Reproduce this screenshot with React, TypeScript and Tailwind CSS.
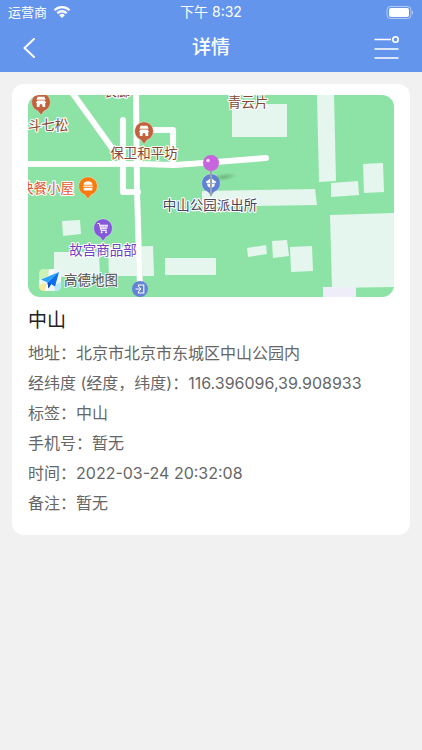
import type { ReactNode } from "react";

const details = [
  { label: "地址", value: "北京市北京市东城区中山公园内" },
  { label: "经纬度 (经度，纬度)", value: "116.396096,39.908933" },
  { label: "标签", value: "中山" },
  { label: "手机号", value: "暂无" },
  { label: "时间", value: "2022-03-24 20:32:08" },
  { label: "备注", value: "暂无" },
];

const buildings = [
  "204,9 259,9 259,42 204,42",
  "289,-1 306,-1 308,86 291,87",
  "303,88 330,86 331,100 303,102",
  "335,69 355,68 356,97 336,98",
  "174,96 287,94 289,110 174,112",
  "302,120 366,118 366,192 304,193",
  "244,146 259,145 261,161 245,163",
  "262,152 284,151 285,176 263,177",
  "219,153 238,150 239,159 220,162",
  "137,163 188,163 188,180 137,180",
  "80,152 125,151 126,181 81,181",
  "34,126 52,125 53,139 35,141",
  "26,157 71,157 72,181 26,182",
];

const roads = [
  "M43 -4 L89 60",
  "M-4 69 H112 L147 70 L175 68 L238 63",
  "M95 25 V97 H110",
  "M108 -4 L109 95 L112 196",
  "M125 35 H145 V70",
];

const labels = [
  { text: "斗七松", x: 20, y: 35, color: "#824934" },
  { text: "长廊", x: 89, y: 1, color: "#824934" },
  { text: "青云片", x: 220, y: 12, color: "#824934" },
  { text: "保卫和平坊", x: 116, y: 63, color: "#824934" },
  { text: "快餐小屋", x: 19, y: 98, color: "#e2582c" },
  { text: "中山公园派出所", x: 182, y: 115, color: "#45455c" },
  { text: "故宫商品部", x: 75, y: 160, color: "#7340bf" },
];

function Pin({ x, y, color, children }: { x: number; y: number; color: string; children: ReactNode }) {
  return (
    <g transform={`translate(${x} ${y})`}>
      <path
        d="M0 13 L-3 9 A9.3 9.3 0 1 1 3 9 Z"
        fill={color}
        stroke="#ffffff"
        strokeOpacity="0.5"
        strokeWidth="0.6"
      />
      {children}
    </g>
  );
}

function Temple() {
  return (
    <g fill="#ffffff">
      <path d="M-3.4 -5.2 H3.4 L4.6 -2.2 H-4.6 Z" />
      <path d="M-3.6 -1.6 H3.6 L5.2 1 H-5.2 Z" />
      <path d="M-4.2 1 H4.2 V5 H1.5 V3.6 A1.5 1.5 0 0 0 -1.5 3.6 V5 H-4.2 Z" />
    </g>
  );
}

function ParkMap() {
  return (
    <svg viewBox="0 0 366 202" className="block h-auto w-full rounded-xl bg-[#8de3a5]" role="img" aria-label="地图">
      {buildings.map((points) => (
        <polygon key={points} points={points} fill="#e4f6ee" />
      ))}
      <rect x="295" y="192" width="33" height="10" fill="#efeef8" />

      <g fill="none" strokeLinecap="round" strokeLinejoin="round">
        {roads.map((d) => (
          <path key={d} d={d} stroke="#d9efe2" strokeWidth="6.2" />
        ))}
        {roads.map((d) => (
          <path key={d} d={d} stroke="#ffffff" strokeWidth="5.4" />
        ))}
      </g>

      <Pin x={13} y={7} color="#c3613d">
        <Temple />
      </Pin>
      <Pin x={116} y={36} color="#c3613d">
        <Temple />
      </Pin>
      <Pin x={60} y={91} color="#f97b0d">
        <path d="M-4.5 -1.2 C-4.5 -5.8 4.5 -5.8 4.5 -1.2 Z" fill="#ffffff" />
        <rect x="-4.9" y="-0.5" width="9.8" height="1.7" rx="0.8" fill="#ffe6c8" />
        <path d="M-4.5 1.9 H4.5 V3 A1.5 1.5 0 0 1 3 4.5 H-3 A1.5 1.5 0 0 1 -4.5 3 Z" fill="#ffffff" />
      </Pin>
      <Pin x={75} y={133} color="#8558dc">
        <path d="M-5.5 -4.5 H-3.6 L-2 2.4 H3.8" fill="none" stroke="#ffffff" strokeWidth="1" />
        <path d="M-3 -3.2 H5 L4 1.2 H-2.2 Z" fill="#ffffff" />
        <path d="M-0.8 -3 V1 M1.3 -3 V1 M3.2 -3 V1 M-3 -1 H4.6" stroke="#8558dc" strokeWidth="0.4" />
        <circle cx="-1.4" cy="4.2" r="1" fill="#ffffff" />
        <circle cx="3" cy="4.2" r="1" fill="#ffffff" />
      </Pin>
      <Pin x={183} y={88} color="#5f82d6">
        <path d="M-5.4 -1 L0 -5 L5.4 -1 L3.8 0.6 L3.5 3 L0 5.4 L-3.5 3 L-3.8 0.6 Z" fill="#ffffff" />
        <path d="M-3.8 0.4 H3.8" stroke="#5f82d6" strokeWidth="0.7" />
      </Pin>

      <g transform="translate(112 194)">
        <circle r="8" fill="#6483d8" />
        <path d="M-1.5 -2 V-4 H3.8 V4 H-1.5 V2" fill="none" stroke="#ffffff" strokeWidth="1.1" />
        <path d="M-4.5 0 H1 M-1 -2 L1 0 L-1 2" fill="none" stroke="#ffffff" strokeWidth="1" />
      </g>

      <g
        fontSize="13.5"
        fontWeight="400"
        textAnchor="middle"
        stroke="#ffffff"
        strokeWidth="2.2"
        strokeLinejoin="round"
        paintOrder="stroke"
      >
        {labels.map((item) => (
          <text key={item.text} x={item.x} y={item.y} fill={item.color}>
            {item.text}
          </text>
        ))}
      </g>

      {/* selected place marker */}
      <defs>
        <radialGradient id="marker-shadow">
          <stop offset="0" stopColor="#4c8a5c" stopOpacity="0.5" />
          <stop offset="1" stopColor="#4c8a5c" stopOpacity="0" />
        </radialGradient>
        <clipPath id="logo-clip">
          <rect x="11" y="174" width="22" height="22" rx="5" />
        </clipPath>
      </defs>
      <ellipse cx="196" cy="82" rx="13" ry="4" transform="rotate(-8 196 82)" fill="url(#marker-shadow)" />
      <rect x="182" y="74" width="2" height="27" fill="#a2a2ab" />
      <circle cx="183" cy="68" r="8" fill="#c964df" />
      <circle cx="180" cy="65.5" r="1.8" fill="#f6dcfb" />

      {/* map provider logo */}
      <g clipPath="url(#logo-clip)">
        <rect x="11" y="174" width="22" height="22" fill="#eef5f6" />
        <path d="M11 174 H21 L20 181 L11 185 Z" fill="#c9f2b4" />
        <path d="M11 190 L18 188 L20 196 H11 Z" fill="#f8e89a" />
        <path d="M26 190 L33 187 V196 H27 Z" fill="#b9e9f7" />
        <path d="M23 174 L26 174 L20 196 H17 Z" fill="#ffffff" />
      </g>
      <path d="M31 177 L13 184.500 L19.500 187.500 Z" fill="#2aa4fa" />
      <path d="M31 177 L19.500 187.500 L20.500 193.500 L23 189 L27 191.500 Z" fill="#0d6df0" />
      <path d="M19.500 187.500 L20.500 193.500 L23 189 Z" fill="#0a4fc0" />
      <text
        x="36"
        y="190"
        fontSize="13.5"
        fontWeight="500"
        fill="#5f6663"
        stroke="#ffffff"
        strokeWidth="1.6"
        paintOrder="stroke"
      >
        高德地图
      </text>
    </svg>
  );
}

function StatusBar() {
  return (
    <div className="grid h-6 grid-cols-3 items-center px-2 text-sm leading-6 text-white">
      <div className="flex items-center gap-1.5">
        <span className="text-[13px]">运营商</span>
        <svg viewBox="0 0 18 14" className="h-[14px] w-[18px]" fill="none" stroke="currentColor" strokeWidth="2.3">
          <path d="M1.5 5.200 A10.500 10.500 0 0 1 16.500 5.200" />
          <path d="M4.300 8.200 A6.600 6.600 0 0 1 13.700 8.200" />
          <path d="M9 13 L6.200 10.200 A4 4 0 0 1 11.800 10.200 Z" fill="currentColor" stroke="none" />
        </svg>
      </div>
      <span className="text-center">下午 8:32</span>
      <svg viewBox="0 0 28 13" className="h-[13px] w-[28px] justify-self-end" fill="none">
        <rect x="1" y="0.5" width="24" height="12" rx="3.5" stroke="#ffffff" strokeOpacity="0.5" />
        <rect x="3" y="2" width="20" height="9" rx="2" fill="#ffffff" />
        <path d="M26 4.500 V8.500 C27.600 8 27.600 5 26 4.500 Z" fill="#ffffff" fillOpacity="0.5" />
      </svg>
    </div>
  );
}

export default function App() {
  return (
    <div className="min-h-screen bg-[#f1f1f1] font-[Inter,'Noto_Sans_CJK_SC',sans-serif]">
      <header className="bg-[#6495ed] text-white">
        <StatusBar />
        <div className="grid h-12 grid-cols-3 items-center px-[22px]">
          <button type="button" aria-label="返回" className="justify-self-start">
            <svg viewBox="0 0 14 20" className="h-5 w-[14px]" fill="none" stroke="currentColor" strokeWidth="2">
              <path d="M12 1 L2.500 10 L12 19" strokeLinecap="round" strokeLinejoin="round" />
            </svg>
          </button>
          <h1 className="text-center text-[19px] font-medium">详情</h1>
          <button type="button" aria-label="菜单" className="justify-self-end">
            <svg viewBox="0 0 26 24" className="h-6 w-[26px]" fill="none" stroke="currentColor" strokeWidth="1.6">
              <path d="M0.500 3.500 H17 M0.500 13 H24.500 M0.500 22 H24.500" />
              <circle cx="21.500" cy="3.500" r="2.700" />
            </svg>
          </button>
        </div>
      </header>

      <main className="p-3">
        <section className="rounded-xl bg-white px-4 pt-[11px] pb-4">
          <ParkMap />
          <h2 className="pt-[9px] text-[19px] leading-[30px] text-[#222222]">中山</h2>
          <dl className="pt-0.5 pb-px text-base leading-[30px] text-[#666666]">
            {details.map((item) => (
              <div key={item.label} className="flex">
                <dt className="shrink-0">{item.label}：</dt>
                <dd>{item.value}</dd>
              </div>
            ))}
          </dl>
        </section>
      </main>
    </div>
  );
}
